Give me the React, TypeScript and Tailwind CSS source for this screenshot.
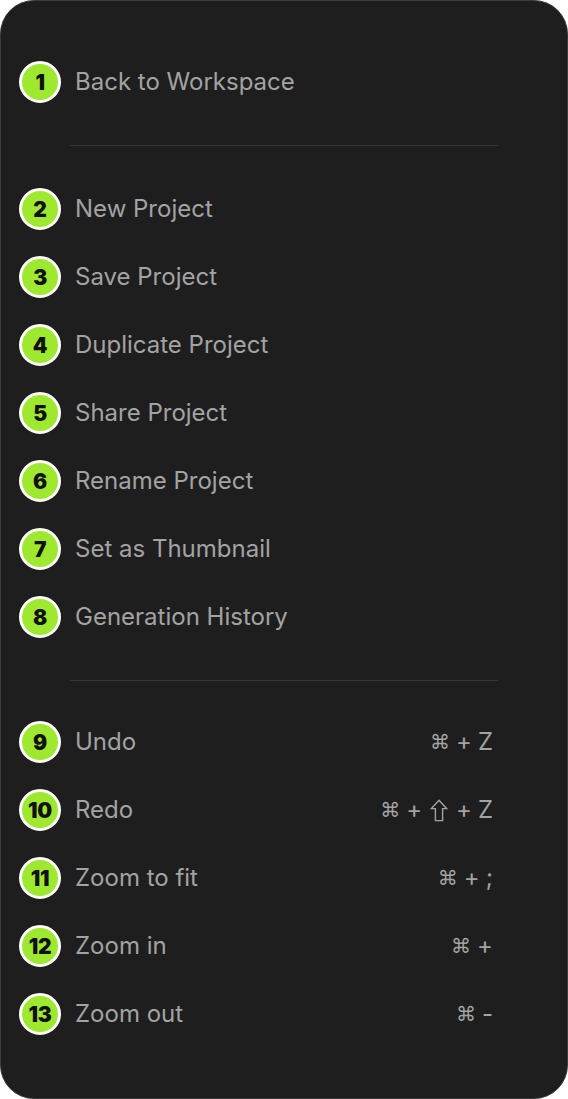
import React from "react";

type Item = { n: number; label: string; sc?: React.ReactNode };

const Shift = () => (
  <svg width="18" height="23" viewBox="0 0 18 23" className="mx-[2px] inline-block" fill="none" stroke="#a3a3a3" strokeWidth="1.4" strokeLinejoin="miter">
    <path d="M9 1.2 L16.6 9.6 L12.6 9.6 L12.6 21.6 L5.4 21.6 L5.4 9.6 L1.4 9.6 Z" />
  </svg>
);

const Cmd = () => <span className="text-[20px] [font-family:'DejaVu_Sans',sans-serif]">⌘</span>;

const g1: Item[] = [{ n: 1, label: "Back to Workspace" }];
const g2: Item[] = [
  { n: 2, label: "New Project" },
  { n: 3, label: "Save Project" },
  { n: 4, label: "Duplicate Project" },
  { n: 5, label: "Share Project" },
  { n: 6, label: "Rename Project" },
  { n: 7, label: "Set as Thumbnail" },
  { n: 8, label: "Generation History" },
];
const g3: Item[] = [
  { n: 9, label: "Undo", sc: <><Cmd /><span>+</span><span>Z</span></> },
  { n: 10, label: "Redo", sc: <><Cmd /><span>+</span><Shift /><span>+</span><span>Z</span></> },
  { n: 11, label: "Zoom to fit", sc: <><Cmd /><span>+</span><span>;</span></> },
  { n: 12, label: "Zoom in", sc: <><Cmd /><span>+</span></> },
  { n: 13, label: "Zoom out", sc: <><Cmd /><span>-</span></> },
];

function Row({ item }: { item: Item }) {
  return (
    <div className="flex h-[68px] items-center pr-[74px]">
      <div className="flex h-[42px] w-[42px] shrink-0 items-center justify-center rounded-full border-[3px] border-white bg-[#9fe830] text-[21px] font-black leading-none text-[#111] [font-family:Inter,sans-serif] tracking-[-0.3px]">
        {item.n}
      </div>
      <span className="ml-[14px] text-[24px] text-[#a3a3a3] [font-family:Inter,sans-serif]">
        {item.label}
      </span>
      {item.sc && (
        <span className="ml-auto flex items-center gap-[6px] text-[24px] text-[#a3a3a3] [font-family:Inter,sans-serif]">
          {item.sc}
        </span>
      )}
    </div>
  );
}

export default function App() {
  return (
    <div className="h-[1099px] w-[568px] bg-white">
      <div className="h-full w-full rounded-[34px] border border-[#3c3c3c] bg-[#1e1e1e] pl-[18px] pt-[47px]">
        {g1.map((i) => (
          <Row key={i.n} item={i} />
        ))}
        <div className="ml-[51px] mr-[69px] mt-[29px] mb-[29px] h-px bg-[#363636]" />
        {g2.map((i) => (
          <Row key={i.n} item={i} />
        ))}
        <div className="ml-[51px] mr-[69px] mt-[29px] mb-[27px] h-px bg-[#363636]" />
        {g3.map((i) => (
          <Row key={i.n} item={i} />
        ))}
      </div>
    </div>
  );
}
